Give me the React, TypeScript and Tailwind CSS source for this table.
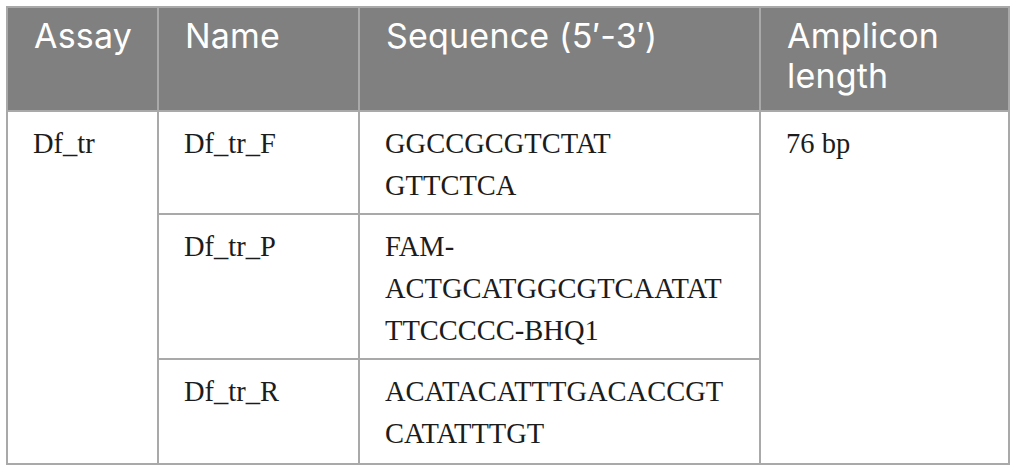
export default function App() {
  const th =
    "border-2 border-[#a9a9a9] px-[26px] pt-[8px] pb-[8px] align-top text-left font-normal text-[34px] leading-[40px] tracking-[0.2px] text-white";
  const td =
    "border-2 border-[#a9a9a9] px-[25px] pt-[11px] align-top text-left text-[28.5px] leading-[42px] text-[#1c1c1c]";

  return (
    <div className="p-[6px] bg-white">
      <table className="w-[1002px] table-fixed border-collapse font-['Liberation_Serif',serif]">
        <colgroup>
          <col className="w-[151px]" />
          <col className="w-[201px]" />
          <col className="w-[401px]" />
          <col className="w-[249px]" />
        </colgroup>
        <thead>
          <tr className="h-[104px] bg-[#808080] font-['Inter',sans-serif]">
            <th className={th}>Assay</th>
            <th className={th}>Name</th>
            <th className={th}>Sequence (5′-3′)</th>
            <th className={th}>
              Amplicon
              <br />
              length
            </th>
          </tr>
        </thead>
        <tbody>
          <tr className="h-[103px]">
            <td className={td} rowSpan={3}>
              Df_tr
            </td>
            <td className={td}>Df_tr_F</td>
            <td className={td}>
              GGCCGCGTCTAT
              <br />
              GTTCTCA
            </td>
            <td className={td} rowSpan={3}>
              76 bp
            </td>
          </tr>
          <tr className="h-[145px]">
            <td className={td}>Df_tr_P</td>
            <td className={td}>
              FAM-
              <br />
              ACTGCATGGCGTCAATAT
              <br />
              TTCCCCC-BHQ1
            </td>
          </tr>
          <tr className="h-[105px]">
            <td className={td}>Df_tr_R</td>
            <td className={td}>
              ACATACATTTGACACCGT
              <br />
              CATATTTGT
            </td>
          </tr>
        </tbody>
      </table>
    </div>
  );
}
